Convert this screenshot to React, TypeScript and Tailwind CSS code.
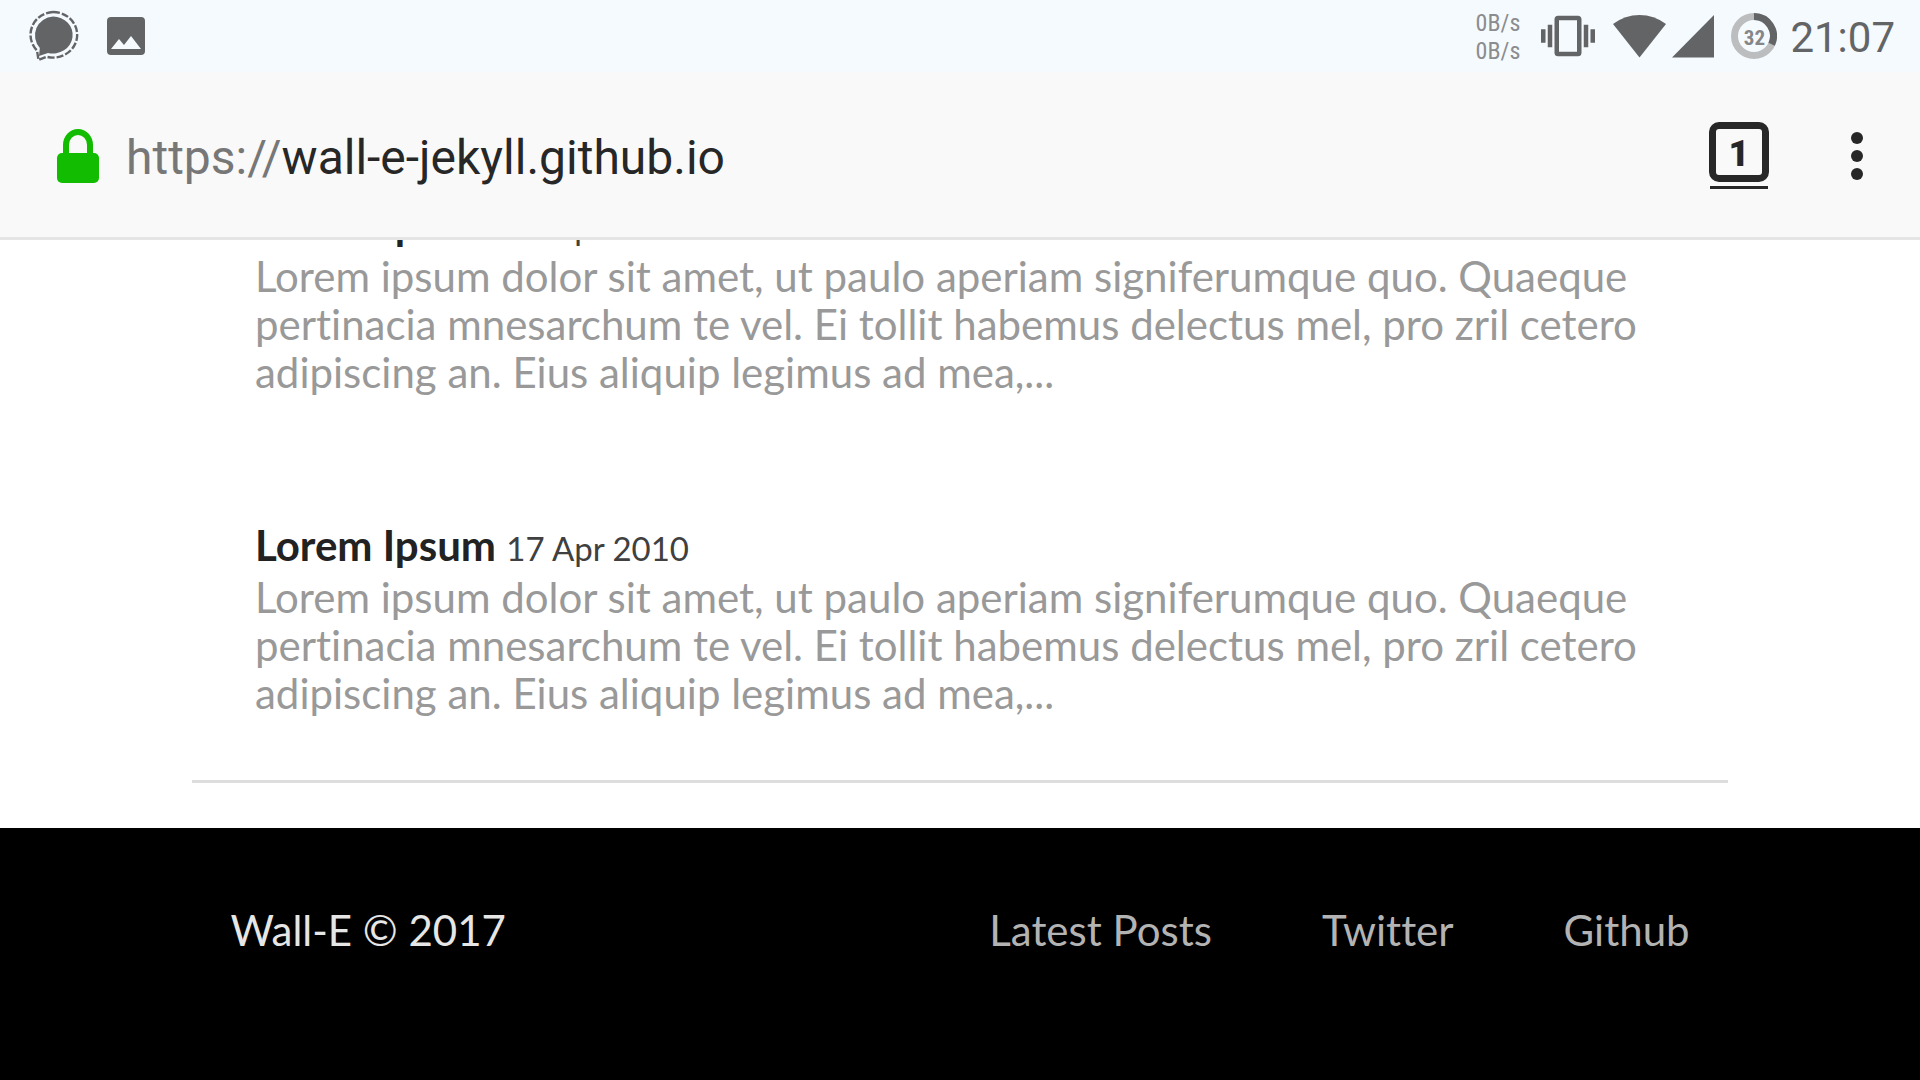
import React from "react";

const excerpt =
  "Lorem ipsum dolor sit amet, ut paulo aperiam signiferumque quo. Quaeque pertinacia mnesarchum te vel. Ei tollit habemus delectus mel, pro zril cetero adipiscing an. Eius aliquip legimus ad mea,...";

const posts = [
  { id: 1, title: "Lorem Ipsum", date: "17 Apr 2010" },
  { id: 2, title: "Lorem Ipsum", date: "17 Apr 2010" },
];

const links = ["Latest Posts", "Twitter", "Github"];

function StatusBar() {
  return (
    <div className="flex h-[72px] shrink-0 items-center justify-between bg-[#f5fafe] pr-[25px] pl-[26px] text-[#636466]">
      <div className="flex items-center gap-[26px]">
        <svg className="size-[54px]" viewBox="0 0 54 54" fill="none" aria-label="Message">
          <path
            d="M27 7.500a19.700 18.500 0 1 1-5 36.400L13 47l.800-8A18.900 18.900 0 0 1 27 7.500z"
            fill="currentColor"
          />
          <path
            d="M27 3a24 22.800 0 1 1-6.500 44.700L12.500 51l-1.500-9.500A23.500 22.800 0 0 1 27 3z"
            stroke="currentColor"
            strokeWidth="2.400"
            strokeDasharray="7 2"
          />
        </svg>
        <svg className="size-[40px]" viewBox="0 0 40 40" aria-label="Picture">
          <rect x="1" y="1" width="38" height="38" rx="4" fill="currentColor" />
          <path d="M5 33l8-10 5 6 7-9 10 13z" fill="#f5fafe" />
        </svg>
      </div>
      <div className="flex items-center">
        <div className="mr-[21px] flex flex-col pt-[2px] font-['Roboto_Condensed','Roboto',sans-serif] text-[24px] leading-7 text-[#8b8c8e]">
          <span>0B/s</span>
          <span>0B/s</span>
        </div>
        <svg className="mr-[18px] size-[54px]" viewBox="0 0 24 24" fill="currentColor" aria-label="Vibrate">
          <path d="M0 15h2V9H0v6zm3 2h2V7H3v10zm19-8v6h2V9h-2zm-3 8h2V7h-2v10zM16.500 3h-9C6.670 3 6 3.670 6 4.500v15c0 .830.670 1.500 1.500 1.500h9c.830 0 1.500-.670 1.500-1.500v-15c0-.830-.670-1.500-1.500-1.500zM16 19H8V5h8v14z" />
        </svg>
        <svg className="mr-[6px] h-[44px] w-[53px]" viewBox="0 0 53 44" fill="currentColor" aria-label="Wi-Fi">
          <path d="M0 10Q12 1 26.500 1T53 10L26.500 43.500z" />
        </svg>
        <svg className="mr-[17px] h-[44px] w-[42px]" viewBox="0 0 42 44" fill="currentColor" aria-label="Signal">
          <path d="M42 1v42.500H0z" />
        </svg>
        <div className="mr-[13px] grid size-[46px] place-items-center">
          <svg className="col-start-1 row-start-1 size-[46px]" viewBox="0 0 46 46" fill="none" strokeWidth="7" aria-label="Battery">
            <circle cx="23" cy="23" r="19.500" stroke="#bbbdbf" />
            <path d="M23 3.500A19.500 19.500 0 0 1 40.600 31.300" stroke="currentColor" />
          </svg>
          <span className="col-start-1 row-start-1 pt-[3px] font-['Roboto_Condensed','Roboto',sans-serif] text-[21px] leading-6 font-bold text-[#858688]">
            32
          </span>
        </div>
        <time className="pt-[3px] text-[42px] leading-12">21:07</time>
      </div>
    </div>
  );
}

function AddressBar() {
  return (
    <header className="flex h-[168px] shrink-0 items-center justify-between border-b-[3px] border-[#e5e5e5] bg-[#f9f9f9] pt-[2px] pr-[42px] pl-[57px] text-[#272727]">
      <div className="flex items-center gap-[27px]">
        <svg className="h-[54px] w-[42px]" viewBox="0 0 42 54" fill="none" aria-label="Secure connection">
          <path d="M9 26V16a12 13 0 0 1 24 0v10" stroke="#12bc00" strokeWidth="6" />
          <rect y="24" width="42" height="30" rx="5" fill="#12bc00" />
        </svg>
        <button type="button" aria-label="Edit address" className="pt-[5px] text-[48px] leading-[60px]">
          <span className="text-[#777777]">https://</span>wall-e-jekyll.github.io
        </button>
      </div>
      <div className="flex items-center gap-[67px]">
        <button type="button" aria-label="Open tabs" className="flex flex-col items-center gap-1">
          <span className="flex size-[60px] items-center justify-center rounded-[10px] border-[7px] border-current pt-[3px] text-[36px] leading-none font-black">
            1
          </span>
          <span className="h-[3px] w-[58px] bg-current" />
        </button>
        <button type="button" aria-label="Menu" className="flex w-[42px] flex-col items-center gap-[6px]">
          <span className="size-3 rounded-full bg-current" />
          <span className="size-3 rounded-full bg-current" />
          <span className="size-3 rounded-full bg-current" />
        </button>
      </div>
    </header>
  );
}

export default function App() {
  return (
    <div className="flex h-screen flex-col overflow-hidden bg-white font-['Roboto',sans-serif]">
      <StatusBar />
      <AddressBar />
      <div className="flex min-h-0 flex-1 flex-col justify-end overflow-hidden font-['Lato',sans-serif] text-[42px] leading-12 [font-variant-ligatures:none]">
        <main className="mx-[10%] mb-[45px] flex flex-col gap-[125px] border-b-[3px] border-[#dddddd] px-[63px] pb-[63px]">
          {posts.map((post) => (
            <article key={post.id}>
              <h2 className="mb-1 font-bold text-[#222222]">
                {post.title} <time className="text-[33px] leading-none font-normal text-[#404040]">{post.date}</time>
              </h2>
              <p className="text-[#999999]">{excerpt}</p>
            </article>
          ))}
        </main>
        <footer className="flex justify-between bg-black px-[12%] pt-[78px] pb-[126px] text-[#e6e6e6]">
          <p>Wall-E © 2017</p>
          <nav className="flex gap-[110px] text-[#b3b3b3]">
            {links.map((label) => (
              <a key={label} href="#">
                {label}
              </a>
            ))}
          </nav>
        </footer>
      </div>
    </div>
  );
}
